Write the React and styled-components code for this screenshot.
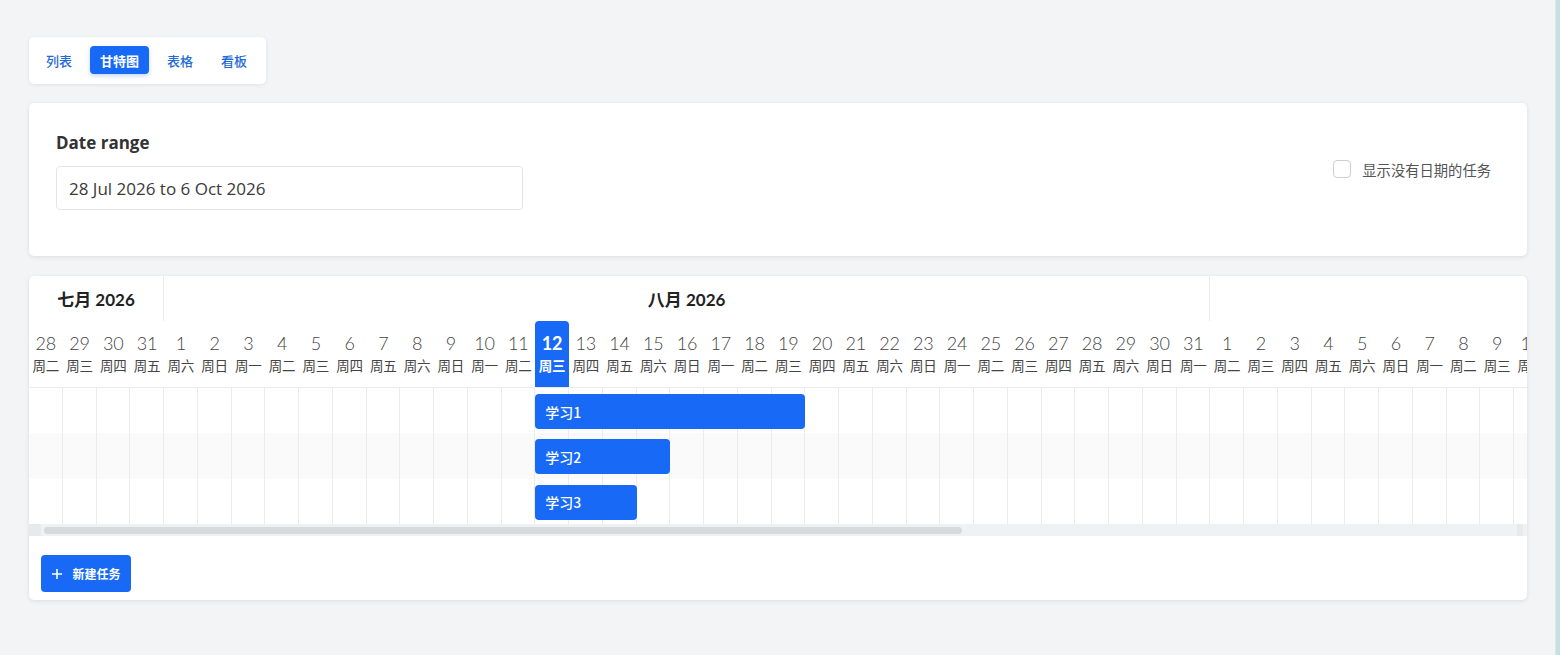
import React from "react";
import styled, { createGlobalStyle } from "styled-components";

const BLUE = "#1769f6";
const COL = 33.75;
const CN = '"Noto Sans CJK SC", sans-serif';
const NUM = 'Lato, "Noto Sans CJK SC", sans-serif';

const WEEK = ["周日", "周一", "周二", "周三", "周四", "周五", "周六"];
const MONTHS = ["一月", "二月", "三月", "四月", "五月", "六月", "七月", "八月", "九月", "十月", "十一月", "十二月"];

function buildDays(start, end) {
    const days = [];
    const d = new Date(start);
    while (d <= end) {
        days.push({ y: d.getFullYear(), m: d.getMonth(), date: d.getDate(), wd: d.getDay() });
        d.setDate(d.getDate() + 1);
    }
    return days;
}

const days = buildDays(new Date(2026, 6, 28), new Date(2026, 9, 6));
const todayIndex = days.findIndex((d) => d.m === 7 && d.date === 12);

const months = days.reduce((acc, d) => {
    const last = acc[acc.length - 1];
    if (last && last.m === d.m) last.count++;
    else acc.push({ m: d.m, y: d.y, count: 1 });
    return acc;
}, []);

const tasks = [
    { name: "学习1", start: todayIndex, span: 8 },
    { name: "学习2", start: todayIndex, span: 4 },
    { name: "学习3", start: todayIndex, span: 3 },
];

const GlobalStyle = createGlobalStyle`
body {
    margin: 0;
    background: #f3f4f6;
    font-family: "Open Sans", "Noto Sans CJK SC", sans-serif;
}
* { box-sizing: border-box; }
`;

export default function App() {
    const [view, setView] = React.useState("甘特图");
    const [showUndated, setShowUndated] = React.useState(false);

    return (
        <>
        <GlobalStyle />
        <Page>
            <Main>
                <Tabs>
                    {["列表", "甘特图", "表格", "看板"].map((t) => (
                        <Tab key={t} $active={view === t} onClick={() => setView(t)}>{t}</Tab>
                    ))}
                </Tabs>

                <FilterCard>
                    <Field>
                        <Label>Date range</Label>
                        <DateInput readOnly value="28 Jul 2026 to 6 Oct 2026" />
                    </Field>
                    <Check onClick={() => setShowUndated(!showUndated)}>
                        <Box $on={showUndated} />
                        <span>显示没有日期的任务</span>
                    </Check>
                </FilterCard>

                <GanttCard>
                    <Viewport>
                        <Timeline style={{ width: days.length * COL }}>
                            <MonthRow>
                                {months.map((mo) => (
                                    <MonthCell key={mo.m} style={{ width: mo.count * COL }}>
                                        {MONTHS[mo.m]} {mo.y}
                                    </MonthCell>
                                ))}
                            </MonthRow>
                            <DayRow>
                                {days.map((d, i) => {
                                    const today = i === todayIndex;
                                    return (
                                        <DayCell key={i} $today={today}>
                                            <DayNum $bold={today}>{d.date}</DayNum>
                                            <WeekDay $bold={today}>{WEEK[d.wd]}</WeekDay>
                                        </DayCell>
                                    );
                                })}
                            </DayRow>
                            {tasks.map((t, r) => (
                                <TaskRow key={t.name} $alt={r % 2 === 1}>
                                    {days.map((d, i) => <GridCell key={i} />)}
                                    <Bar style={{ left: t.start * COL, width: t.span * COL }}>{t.name}</Bar>
                                </TaskRow>
                            ))}
                        </Timeline>
                    </Viewport>
                    <ScrollTrack>
                        <ScrollArrow />
                        <ScrollThumb />
                        <ScrollArrow $right />
                    </ScrollTrack>
                    <Footer>
                        <NewButton>
                            <svg width="12" height="12" viewBox="0 0 12 12">
                                <path d="M6 1v10M1 6h10" stroke="#fff" strokeWidth="1.6" />
                            </svg>
                            新建任务
                        </NewButton>
                    </Footer>
                </GanttCard>
            </Main>
            <EdgeStrip />
        </Page>
        </>
    );
}

const Page = styled.div`
display: flex;
min-height: 655px;
`;

const Main = styled.main`
flex: 1;
min-width: 0;
padding: 37px 28px 0 29px;
display: flex;
flex-direction: column;
align-items: flex-start;
`;

const EdgeStrip = styled.div`
flex: none;
width: 5px;
background: #c6dfe1;
border-left: 1px solid #dfe7ea;
`;

const Tabs = styled.nav`
display: flex;
gap: 8px;
padding: 9px 9px 10px 7px;
background: #fff;
border-radius: 5px;
box-shadow: 0 1px 4px rgba(0, 0, 0, 0.08);
`;

const Tab = styled.button`
height: 28px;
padding: 0 10px;
border: none;
border-radius: 4px;
font-family: ${CN};
font-size: 13px;
font-weight: ${(p) => (p.$active ? 700 : 500)};
color: ${(p) => (p.$active ? "#fff" : "#1f6bd6")};
background: ${(p) => (p.$active ? BLUE : "transparent")};
box-shadow: ${(p) => (p.$active ? "0 2px 4px rgba(23, 105, 246, 0.25)" : "none")};
cursor: pointer;
`;

const FilterCard = styled.section`
align-self: stretch;
margin-top: 19px;
background: #fff;
border-radius: 5px;
box-shadow: 0 1px 4px rgba(0, 0, 0, 0.1);
padding: 28px 36px 46px 27px;
display: flex;
justify-content: space-between;
align-items: center;
`;

const Field = styled.div`
display: flex;
flex-direction: column;
`;

const Label = styled.label`
font-size: 17px;
line-height: 24px;
font-weight: 700;
color: #333;
margin-bottom: 11px;
`;

const DateInput = styled.input`
width: 467px;
height: 44px;
padding: 0 12px;
border: 1px solid #e3e5e8;
border-radius: 4px;
font-family: "Open Sans", sans-serif;
font-size: 17px;
color: #3a3a3a;
outline: none;
`;

const Check = styled.label`
display: flex;
align-items: center;
gap: 11px;
margin-top: -3px;
font-family: ${CN};
font-size: 14.3px;
color: #555;
cursor: pointer;
`;

const Box = styled.span`
width: 18px;
height: 18px;
border: 1.5px solid #cfcfcf;
border-radius: 4px;
background: ${(p) => (p.$on ? BLUE : "#fff")};
`;

const GanttCard = styled.section`
align-self: stretch;
min-width: 0;
margin-top: 20px;
background: #fff;
border-radius: 5px;
box-shadow: 0 1px 4px rgba(0, 0, 0, 0.1);
overflow: hidden;
`;

const Viewport = styled.div`
width: 100%;
overflow: hidden;
`;

const Timeline = styled.div`
display: flex;
flex-direction: column;
`;

const MonthRow = styled.div`
display: flex;
height: 45px;
`;

const MonthCell = styled.div`
flex: none;
display: flex;
align-items: center;
justify-content: center;
border-right: 1px solid #ececec;
font-family: ${NUM};
font-size: 17px;
font-weight: 700;
color: #222;
`;

const DayRow = styled.div`
display: flex;
height: 67px;
border-bottom: 1px solid #ebebeb;
`;

const DayCell = styled.div`
flex: none;
width: ${COL}px;
display: flex;
flex-direction: column;
align-items: center;
justify-content: center;
padding-bottom: 1px;
border-radius: 4px 4px 0 0;
background: ${(p) => (p.$today ? BLUE : "transparent")};
color: ${(p) => (p.$today ? "#fff" : "#444")};
`;

const DayNum = styled.span`
font-family: ${NUM};
font-size: 18px;
line-height: 23px;
font-weight: ${(p) => (p.$bold ? 700 : 300)};
`;

const WeekDay = styled.span`
font-family: ${CN};
font-size: 13.5px;
line-height: 20px;
font-weight: ${(p) => (p.$bold ? 700 : 400)};
white-space: nowrap;
`;

const TaskRow = styled.div`
position: relative;
display: flex;
height: 45.4px;
background: ${(p) => (p.$alt ? "#fafafa" : "#fff")};
`;

const GridCell = styled.div`
flex: none;
width: ${COL}px;
border-right: 1px solid #ececec;
`;

const Bar = styled.div`
position: absolute;
top: 6px;
height: 35px;
padding: 0 10px;
display: flex;
align-items: center;
border-radius: 4px;
background: ${BLUE};
color: #fff;
font-family: ${CN};
font-size: 14px;
font-weight: 500;
`;

const ScrollTrack = styled.div`
display: flex;
align-items: center;
height: 12px;
background: #f0f1f2;
padding: 0 4px 0 0;
`;

const ScrollArrow = styled.div`
width: ${(p) => (p.$right ? 6 : 12)}px;
height: 12px;
margin-left: ${(p) => (p.$right ? "auto" : 0)};
background: #e8e9eb;
`;

const ScrollThumb = styled.div`
margin-left: 3px;
width: 918px;
height: 7px;
border-radius: 4px;
background: #d8d9db;
`;

const Footer = styled.footer`
padding: 19px 12px 8px;
`;

const NewButton = styled.button`
width: 90px;
height: 37px;
display: flex;
align-items: center;
justify-content: center;
gap: 9px;
border: none;
border-radius: 4px;
background: ${BLUE};
color: #fff;
font-family: ${CN};
font-size: 12px;
font-weight: 700;
cursor: pointer;
`;
